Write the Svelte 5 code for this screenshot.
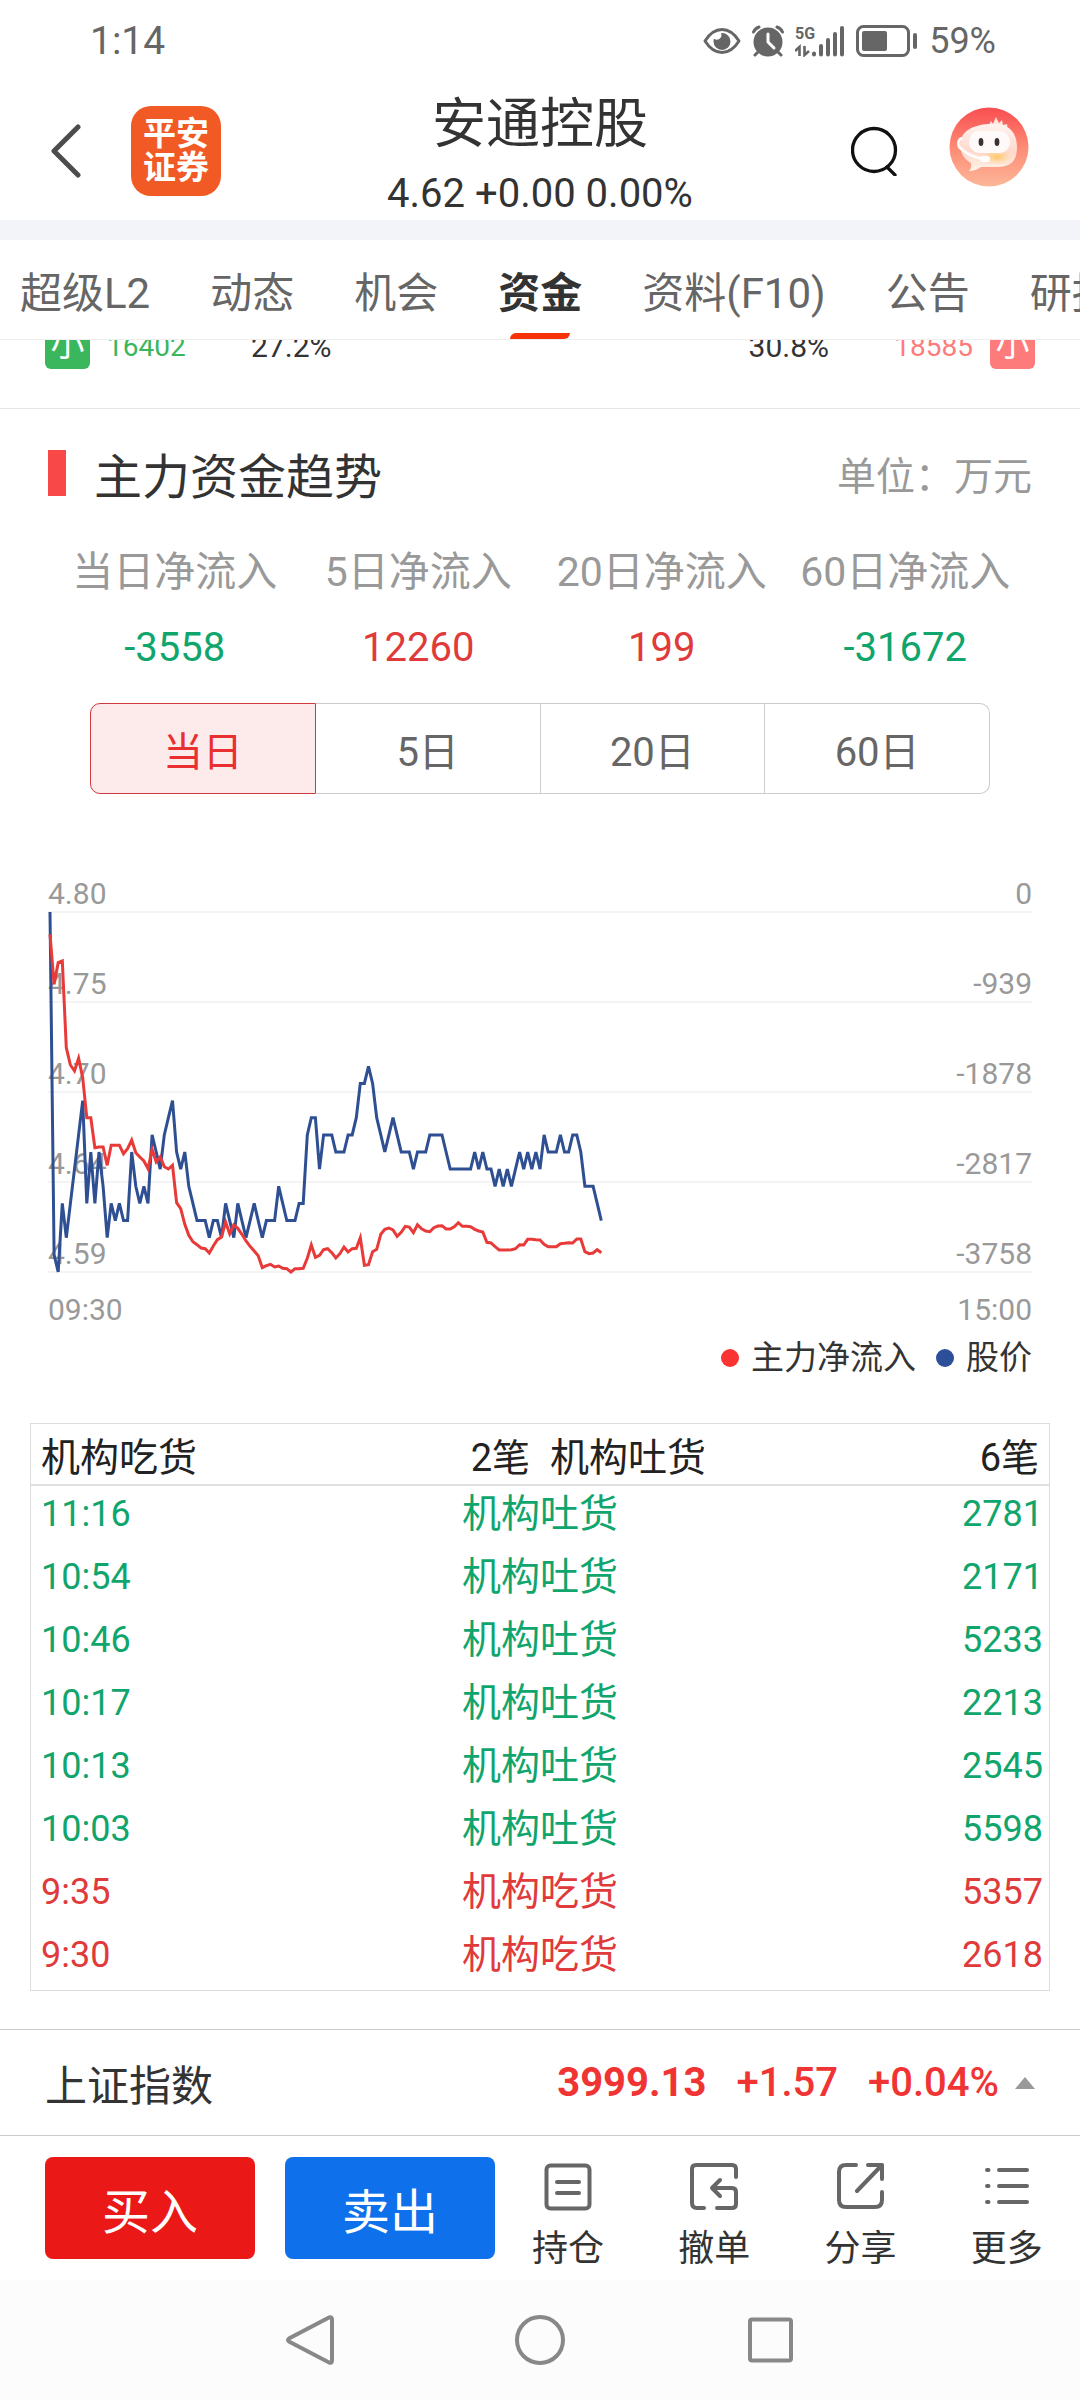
<script lang="ts">
	type Tone = 'up' | 'down';

	const tabs = ['超级L2', '动态', '机会', '资金', '资料(F10)', '公告', '研报'];
	let activeTab: string = $state('资金');

	const inflows: { label: string; value: string; tone: Tone }[] = [
		{ label: '当日净流入', value: '-3558', tone: 'down' },
		{ label: '5日净流入', value: '12260', tone: 'up' },
		{ label: '20日净流入', value: '199', tone: 'up' },
		{ label: '60日净流入', value: '-31672', tone: 'down' }
	];

	const periods = ['当日', '5日', '20日', '60日'];
	let activePeriod: string = $state('当日');

	const axis = [
		['4.80', '0'],
		['4.75', '-939'],
		['4.70', '-1878'],
		['4.64', '-2817'],
		['4.59', '-3758']
	];

	// one point per minute, price in cents
	const prices = [
		480, 460, 459, 463, 461, 463, 465, 467, 469, 463, 466, 463, 466, 464, 461, 463, 462, 463, 462,
		462, 466, 464, 463, 464, 463, 467, 466, 465, 467, 468, 469, 466, 465, 466, 464, 463, 462, 462,
		462, 461, 462, 462, 461, 463, 462, 461, 463, 462, 461, 462, 463, 462, 461, 462, 462, 462, 464,
		463, 462, 462, 462, 463, 463, 467, 468, 468, 465, 467, 467, 467, 466, 466, 466, 467, 467, 468,
		470, 470, 471, 470, 468, 467, 466, 467, 468, 467, 466, 466, 466, 465, 466, 466, 466, 467, 467,
		467, 467, 466, 465, 465, 465, 465, 465, 465, 466, 465, 466, 465, 465, 464, 465, 464, 465, 464,
		465, 466, 465, 466, 465, 466, 465, 467, 466, 466, 466, 467, 466, 466, 467, 467, 466, 464, 464,
		464, 463, 462
	];

	// net outflow, 1080 is the bottom of the right axis
	const outflow = [
		67, 217, 152, 147, 407, 459, 477, 439, 497, 617, 617, 707, 705, 705, 760, 700, 700, 700, 725,
		710, 684, 722, 735, 747, 770, 712, 750, 735, 764, 771, 760, 872, 890, 937, 970, 989, 998, 1008,
		1010, 1023, 1002, 983, 975, 930, 965, 939, 949, 967, 987, 1003, 1017, 1031, 1067, 1061, 1057,
		1065, 1062, 1069, 1070, 1080, 1070, 1070, 1069, 1039, 999, 1036, 1030, 1013, 1010, 1022, 1038,
		1025, 1005, 1020, 1010, 1009, 977, 1060, 1058, 1019, 1012, 967, 952, 948, 954, 973, 961, 943,
		945, 962, 938, 950, 957, 959, 947, 942, 941, 951, 951, 944, 932, 943, 943, 944, 952, 957, 960,
		991, 993, 1004, 1014, 1014, 1014, 1013, 1010, 998, 999, 982, 982, 983, 984, 997, 1004, 1004,
		1004, 995, 994, 992, 993, 981, 981, 1019, 1025, 1023, 1013, 1022
	];

	const stepX = 980 / 240;
	const toPoints = (ys: number[]) =>
		ys.map((y, i) => `${(2 + i * stepX).toFixed(1)},${y.toFixed(1)}`).join(' ');

	const priceLine = toPoints(prices.map((p) => ((480 - p) * 360) / 21));
	const flowLine = toPoints(outflow.map((v) => v / 3));

	const trades: { time: string; type: string; amount: number; tone: Tone }[] = [
		{ time: '11:16', type: '机构吐货', amount: 2781, tone: 'down' },
		{ time: '10:54', type: '机构吐货', amount: 2171, tone: 'down' },
		{ time: '10:46', type: '机构吐货', amount: 5233, tone: 'down' },
		{ time: '10:17', type: '机构吐货', amount: 2213, tone: 'down' },
		{ time: '10:13', type: '机构吐货', amount: 2545, tone: 'down' },
		{ time: '10:03', type: '机构吐货', amount: 5598, tone: 'down' },
		{ time: '9:35', type: '机构吃货', amount: 5357, tone: 'up' },
		{ time: '9:30', type: '机构吃货', amount: 2618, tone: 'up' }
	];
</script>

<div class="app">
	<div class="status">
		<span>1:14</span>
		<div class="status-icons">
			<svg width="38" height="28" viewBox="0 0 38 28">
				<path d="M2 14C7 6 13 2.500 19 2.500S31 6 36 14C31 22 25 25.500 19 25.500S7 22 2 14Z" fill="none" stroke="#666" stroke-width="3" stroke-linejoin="round" />
				<path d="M19 6a8.500 8.500 0 1 1-8.500 8.500c0-1 .2-2 .5-2.800a4.600 4.600 0 0 0 7-5.500Z" fill="#666" />
			</svg>
			<svg width="32" height="32" viewBox="0 0 32 32">
				<circle cx="16" cy="17" r="14.500" fill="#666" />
				<path d="M1.500 7Q3 3.500 7 2M30.500 7Q29 3.500 25 2M6 27l-3 3M26 27l3 3" stroke="#666" stroke-width="3" stroke-linecap="round" fill="none" />
				<path d="M16 9v8l6 6" stroke="#fff" stroke-width="3" stroke-linecap="round" stroke-linejoin="round" fill="none" />
			</svg>
			<svg width="50" height="32" viewBox="0 0 50 32">
				<text x="0" y="14" font-size="16" font-weight="700" fill="#666">5G</text>
				<path d="M4.500 31V22L0 26M9.500 21v9l4.500-4" stroke="#666" stroke-width="2.600" fill="none" />
				<path d="M19 28.500v1M26 21v8.500M33 15v14.500M40 9v20.500M47 3v26.500" stroke="#666" stroke-width="4" stroke-linecap="round" />
			</svg>
			<svg width="62" height="32" viewBox="0 0 62 32">
				<rect x="1.500" y="1.500" width="51" height="29" rx="6" fill="none" stroke="#666" stroke-width="3" />
				<rect x="6" y="6" width="25" height="20" rx="2" fill="#666" />
				<rect x="57" y="8" width="4" height="16" rx="2" fill="#666" />
			</svg>
			<span>59%</span>
		</div>
	</div>

	<header>
		<div class="side">
			<button aria-label="返回">
				<svg width="30" height="54" viewBox="0 0 30 54">
					<path d="M27 3 3 27l24 24" fill="none" stroke="#4c4c4c" stroke-width="5" stroke-linecap="round" stroke-linejoin="round" />
				</svg>
			</button>
			<a class="logo" href="#home"><span>平安</span><span>证券</span></a>
		</div>
		<div class="stock">
			<h1>安通控股</h1>
			<p>4.62 +0.00 0.00%</p>
		</div>
		<div class="side right">
			<button aria-label="搜索">
				<svg width="48" height="50" viewBox="0 0 48 50">
					<circle cx="23" cy="24" r="21.500" fill="none" stroke="#111" stroke-width="3.300" />
					<path d="M36 41l8 8" stroke="#111" stroke-width="3.300" stroke-linecap="round" />
				</svg>
			</button>
			<button aria-label="智能客服">
				<svg width="80" height="88" viewBox="0 0 80 88">
					<defs>
						<linearGradient id="sky" x1="0" y1="0" x2="0" y2="1">
							<stop offset="0" stop-color="#f94e50" />
							<stop offset="0.500" stop-color="#fd8a74" />
							<stop offset="1" stop-color="#fdb799" />
						</linearGradient>
						<linearGradient id="head" x1="0" y1="0" x2="0" y2="1">
							<stop offset="0" stop-color="#fff3f0" />
							<stop offset="0.600" stop-color="#ffd9cc" />
							<stop offset="1" stop-color="#fff4ea" />
						</linearGradient>
						<radialGradient id="glow">
							<stop offset="0" stop-color="#ffc65c" />
							<stop offset="1" stop-color="#ffdcb8" stop-opacity="0" />
						</radialGradient>
					</defs>
					<circle cx="40" cy="40" r="39.500" fill="url(#sky)" />
					<path d="M39 20l3-6 2 3 3-7 3 6 3-3 1 5 4-1 1 7Z" fill="#ffe3dd" />
					<path d="M40 17C58 15 68 24 68 40S60 60 47 60H32q-5 4-12 4 3-3 2-8C14 52 11 44 11 37 12 24 24 18 40 17Z" fill="url(#head)" />
					<ellipse cx="48" cy="50" rx="18" ry="9" fill="url(#glow)" />
					<rect x="20" y="24" width="41" height="22" rx="11" fill="#fffafa" />
					<ellipse cx="32" cy="35" rx="2.400" ry="4" fill="#3d3030" />
					<ellipse cx="48" cy="35" rx="2.400" ry="4" fill="#3d3030" />
					<path d="M13 31q-5 2-3 9 9 9 24 12" fill="none" stroke="#fff" stroke-width="2.500" />
					<rect x="31" y="49" width="10" height="6" rx="3" fill="#fff" />
				</svg>
			</button>
		</div>
	</header>

	<nav class="tabs">
		{#each tabs as tab}
			<button class:active={tab === activeTab} onclick={() => (activeTab = tab)}>{tab}</button>
		{/each}
	</nav>

	<main>
		<!-- last row of the order size list, scrolled under the tabs -->
		<div class="orders">
			<span class="badge sell">小</span>
			<span class="amount green">16402</span>
			<span>27.2%</span>
			<span class="end">30.8%</span>
			<span class="amount pink">18585</span>
			<span class="badge buy">小</span>
		</div>

		<section class="trend">
			<div class="heading">
				<h2>主力资金趋势</h2>
				<span>单位：万元</span>
			</div>

			<dl class="inflows">
				{#each inflows as item}
					<div>
						<dt>{item.label}</dt>
						<dd class={item.tone}>{item.value}</dd>
					</div>
				{/each}
			</dl>

			<div class="periods">
				{#each periods as period}
					<button class:active={period === activePeriod} onclick={() => (activePeriod = period)}>
						{period}
					</button>
				{/each}
			</div>

			<div class="chart">
				{#each axis as [left, right]}
					<div class="grid-row"><span>{left}</span><span>{right}</span></div>
				{/each}
				<svg class="lines" viewBox="0 0 984 360" preserveAspectRatio="none">
					<polyline points={priceLine} stroke="#2f4f93" />
					<polyline points={flowLine} stroke="#e83a38" />
				</svg>
			</div>
			<div class="times"><span>09:30</span><span>15:00</span></div>
			<div class="legend">
				<span class="red">主力净流入</span>
				<span class="blue">股价</span>
			</div>
		</section>

		<section class="trades">
			<div class="summary">
				<div><span>机构吃货</span><span>2笔</span></div>
				<div><span>机构吐货</span><span>6笔</span></div>
			</div>
			<table>
				<tbody>
					{#each trades as trade}
						<tr class={trade.tone}>
							<td>{trade.time}</td>
							<td class="type">{trade.type}</td>
							<td>{trade.amount}</td>
						</tr>
					{/each}
				</tbody>
			</table>
		</section>
	</main>

	<div class="index">
		<span class="name">上证指数</span>
		<strong>3999.13</strong>
		<span>+1.57</span>
		<span>+0.04%</span>
		<svg width="20" height="12" viewBox="0 0 20 12"><path d="M10 0 20 12H0Z" fill="#999" /></svg>
	</div>

	<div class="actions">
		<button class="trade buy">买入</button>
		<button class="trade sell">卖出</button>
		<div class="tools">
			<button>
				<svg viewBox="0 0 48 48">
					<rect x="2.500" y="2.500" width="43" height="43" rx="4" />
					<path d="M13 19h22M13 30h22" />
				</svg>
				持仓
			</button>
			<button>
				<svg viewBox="0 0 48 48">
					<path d="M46 14V6q0-4-4-4H6Q2 2 2 6v34q0 5 5 5h7M27 45h15q4 0 4-4V29q0-4-4-4H22M30 17l-8 8 8 8" />
				</svg>
				撤单
			</button>
			<button>
				<svg viewBox="0 0 48 48">
					<path d="M19 2H9Q2 2 2 9v28q0 7 7 7h29q7 0 7-7v-8M31 2h14v14M45 2 20 28" />
				</svg>
				分享
			</button>
			<button>
				<svg viewBox="0 0 48 48">
					<path d="M4 7h1.500M4 23h1.500M4 39h1.500M16 7h28M16 23h28M16 39h28" />
				</svg>
				更多
			</button>
		</div>
	</div>

	<div class="system">
		<button aria-label="后退">
			<svg viewBox="0 0 52 52"><path d="M45 3.500 5 24.500q-2 1.500 0 3L45 48.500q3 1 3-2v-41q0-3-3-2Z" /></svg>
		</button>
		<button aria-label="主屏幕">
			<svg viewBox="0 0 52 52"><circle cx="26" cy="26" r="23" /></svg>
		</button>
		<button aria-label="最近任务">
			<svg viewBox="0 0 52 52"><rect x="6" y="5.500" width="41" height="41" rx="2" /></svg>
		</button>
	</div>
</div>

<style>
	:global(body) {
		margin: 0;
		background: #fff;
	}

	.app {
		font-family: Roboto, 'Noto Sans CJK SC', sans-serif;
		font-size: 40px;
		color: #333;
		background: #fff;
		overflow: hidden;
	}

	button {
		padding: 0;
		border: 0;
		background: none;
		font: inherit;
		color: inherit;
		white-space: nowrap;
	}

	svg {
		display: block;
	}

	h1,
	h2,
	p,
	dl,
	dd {
		margin: 0;
		font-weight: 400;
	}

	.up {
		color: #e03a3a;
	}

	.down {
		color: #10a56c;
	}

	.status {
		display: flex;
		justify-content: space-between;
		align-items: center;
		height: 82px;
		padding: 0 84px 0 90px;
		font-size: 39px;
		color: #666;
	}

	.status-icons {
		display: flex;
		align-items: center;
		gap: 11px;
		font-size: 36px;
	}

	header {
		display: grid;
		grid-template-columns: 1fr auto 1fr;
		height: 138px;
		border-bottom: 20px solid #f3f4f9;
	}

	.side {
		display: flex;
		align-items: center;
		gap: 50px;
		padding: 0 51px;
	}

	.side.right {
		justify-content: flex-end;
	}

	.logo {
		display: flex;
		flex-direction: column;
		justify-content: center;
		width: 90px;
		height: 90px;
		border-radius: 20px;
		background: #f15a24;
		color: #fff;
		font-size: 33px;
		font-weight: 700;
		line-height: 34px;
		text-align: center;
		text-decoration: none;
	}

	.stock {
		text-align: center;
	}

	h1 {
		font-size: 54px;
		line-height: 86px;
	}

	.stock p {
		line-height: 52px;
	}

	.tabs {
		display: flex;
		gap: 60px;
		padding-left: 20px;
		height: 99px;
		border-bottom: 1px solid #eee;
		overflow: hidden;
		font-size: 42px;
		color: #666;
	}

	.tabs button {
		position: relative;
		flex: none;
	}

	.tabs .active {
		color: #333;
		font-weight: 700;
	}

	.tabs .active::after {
		content: '';
		position: absolute;
		left: 12px;
		right: 12px;
		bottom: 0;
		height: 6px;
		border-radius: 6px 0;
		background: #f83208;
	}

	.orders {
		display: flex;
		align-items: flex-end;
		height: 29px;
		padding: 0 45px 39px;
		clip-path: inset(0);
		border-bottom: 1px solid #e5e5e5;
		font-size: 30px;
		line-height: 45px;
	}

	.orders .badge {
		width: 45px;
		height: 45px;
		border-radius: 6px;
		color: #fff;
		font-size: 34px;
		line-height: 41px;
		text-align: center;
	}

	.badge.sell {
		background: #3ab65c;
	}

	.badge.buy {
		background: #fd7b7b;
	}

	.orders .amount {
		width: 161px;
		padding: 0 17px;
		box-sizing: border-box;
		font-size: 28px;
	}

	.amount.green {
		color: #3ab65c;
	}

	.amount.pink {
		text-align: right;
		color: #fd7b7b;
	}

	.orders .end {
		margin-left: auto;
	}

	.heading {
		display: flex;
		justify-content: space-between;
		align-items: center;
		margin: 41px 48px 0;
		height: 46px;
		border-left: 18px solid #f94848;
		padding-left: 28px;
	}

	.heading h2 {
		font-size: 48px;
	}

	.heading span {
		font-size: 39px;
		color: #999;
	}

	.inflows {
		display: grid;
		grid-template-columns: repeat(4, 1fr);
		margin: 38px 53px 0;
		text-align: center;
	}

	.inflows dt {
		font-size: 41px;
		line-height: 76px;
		color: #999;
	}

	.inflows dd {
		line-height: 76px;
	}

	.periods {
		display: flex;
		margin: 17px 90px 0;
	}

	.periods button {
		flex: 1;
		height: 91px;
		border: 1px solid #ccc;
		border-left-width: 0;
		color: #666;
	}

	.periods button:first-child {
		border-left-width: 1px;
		border-radius: 10px 0 0 10px;
	}

	.periods button:last-child {
		border-radius: 0 10px 10px 0;
	}

	.periods .active {
		border-color: #d03a3e;
		background: #fdeaea;
		color: #e83030;
	}

	.chart {
		position: relative;
		margin: 29px 48px 0;
		font-size: 30px;
		color: #999;
	}

	.grid-row {
		display: flex;
		justify-content: space-between;
		align-items: flex-end;
		height: 88px;
		border-bottom: 2px solid #f4f4f4;
		line-height: 34px;
	}

	.lines {
		position: absolute;
		left: 0;
		bottom: 1px;
		width: 100%;
		height: 360px;
		overflow: visible;
	}

	.lines polyline {
		fill: none;
		stroke-width: 3;
		vector-effect: non-scaling-stroke;
	}

	.times {
		display: flex;
		justify-content: space-between;
		margin: 13px 48px 0;
		font-size: 30px;
		line-height: 48px;
		color: #999;
	}

	.legend {
		display: flex;
		justify-content: flex-end;
		gap: 20px;
		margin: 0 48px;
		font-size: 33px;
		line-height: 48px;
	}

	.legend span {
		display: flex;
		align-items: center;
		gap: 12px;
	}

	.legend span::before {
		content: '';
		width: 18px;
		height: 18px;
		border-radius: 50%;
		background: #f93432;
	}

	.legend .blue::before {
		background: #2d4f99;
	}

	.trades {
		margin: 41px 30px 38px;
		border: 1px solid #ddd;
		font-size: 39px;
	}

	.summary {
		display: grid;
		grid-template-columns: 1fr 1fr;
		padding-top: 8px;
		border-bottom: 2px solid #e0e0e0;
		line-height: 52px;
		color: #222;
	}

	.summary div {
		display: flex;
		justify-content: space-between;
		padding: 0 10px;
	}

	.summary span + span {
		font-size: 38px;
	}

	table {
		width: 100%;
		table-layout: fixed;
		border-collapse: collapse;
	}

	td {
		height: 63px;
		padding: 0 6px 6px 10px;
		box-sizing: border-box;
		font-size: 36px;
		line-height: 57px;
	}

	td.type {
		padding: 0 0 6px;
		font-size: 39px;
		text-align: center;
	}

	td:last-child {
		text-align: right;
	}

	.index {
		display: flex;
		align-items: center;
		height: 105px;
		padding: 0 45px;
		border: solid #ccc;
		border-width: 1px 0;
		font-weight: 500;
		color: #f03434;
	}

	.index .name {
		margin-right: auto;
		font-size: 42px;
		font-weight: 400;
		color: #333;
	}

	.index span + span,
	.index strong + span {
		margin-left: 30px;
	}

	.index svg {
		margin-left: 16px;
	}

	.actions {
		display: flex;
		align-items: flex-start;
		padding: 21px 0 7px 45px;
	}

	.trade {
		width: 210px;
		height: 102px;
		margin-right: 30px;
		border-radius: 8px;
		color: #fff;
		font-size: 48px;
	}

	.trade.buy {
		background: #eb1818;
	}

	.trade.sell {
		margin-right: 0;
		background: #0f70eb;
	}

	.tools {
		display: flex;
		flex: 1;
		padding-top: 6px;
	}

	.tools button {
		display: flex;
		flex: 1;
		flex-direction: column;
		align-items: center;
		gap: 14px;
		font-size: 36px;
		line-height: 48px;
	}

	.tools svg {
		width: 48px;
		height: 48px;
		fill: none;
		stroke: #666;
		stroke-width: 4;
		stroke-linecap: round;
		stroke-linejoin: round;
	}

	.system {
		display: flex;
		justify-content: center;
		gap: 178px;
		padding: 34px 0;
		background: #fcfcfc;
	}

	.system svg {
		width: 52px;
		height: 52px;
		fill: none;
		stroke: #888;
		stroke-width: 4;
	}
</style>
